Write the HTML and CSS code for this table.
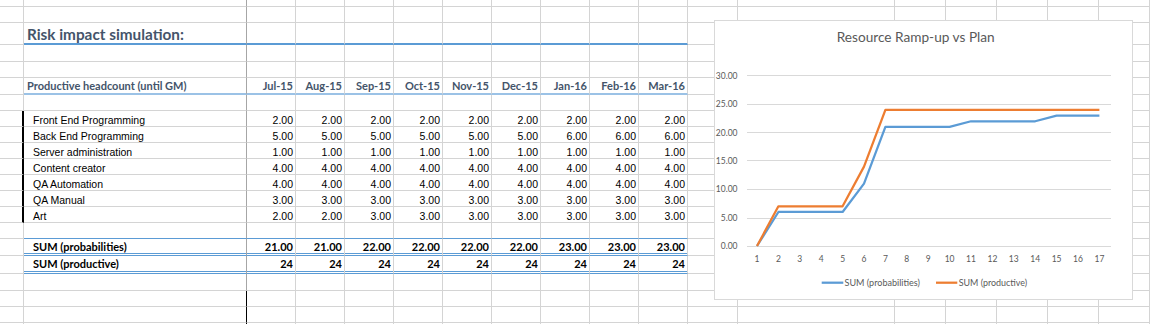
FILE: index.html
```html
<!DOCTYPE html>
<html lang="en">
<head>
<meta charset="utf-8">
<title>Risk impact simulation</title>
<link rel="stylesheet" href="styles.css">
</head>
<body>
<div class="sheet">
  <div class="row h7"><div></div><div></div><div></div><div></div><div></div><div></div><div></div><div></div><div></div><div></div><div></div><div></div><div></div><div></div><div></div><div></div><div></div><div></div></div>
  <div class="row h16"><div></div><div></div><div></div><div></div><div></div><div></div><div></div><div></div><div></div><div></div><div></div><div></div><div></div><div></div><div></div><div></div><div></div><div></div></div>
  <div class="row h22 title"><div></div><div class="t-title">Risk impact simulation:</div><div></div><div></div><div></div><div></div><div></div><div></div><div></div><div></div><div></div><div></div><div></div><div></div><div></div><div></div><div></div><div></div></div>
  <div class="row h17"><div></div><div></div><div></div><div></div><div></div><div></div><div></div><div></div><div></div><div></div><div></div><div></div><div></div><div></div><div></div><div></div><div></div><div></div></div>
  <div class="row h16"><div></div><div></div><div></div><div></div><div></div><div></div><div></div><div></div><div></div><div></div><div></div><div></div><div></div><div></div><div></div><div></div><div></div><div></div></div>
  <div class="row h17 head"><div></div><div>Productive headcount (until GM)</div><div>Jul-15</div><div>Aug-15</div><div>Sep-15</div><div>Oct-15</div><div>Nov-15</div><div>Dec-15</div><div>Jan-16</div><div>Feb-16</div><div>Mar-16</div><div></div><div></div><div></div><div></div><div></div><div></div><div></div></div>
  <div class="row h16"><div></div><div></div><div></div><div></div><div></div><div></div><div></div><div></div><div></div><div></div><div></div><div></div><div></div><div></div><div></div><div></div><div></div><div></div></div>
  <div class="row h16 data"><div></div><div>Front End Programming</div><div>2.00</div><div>2.00</div><div>2.00</div><div>2.00</div><div>2.00</div><div>2.00</div><div>2.00</div><div>2.00</div><div>2.00</div><div></div><div></div><div></div><div></div><div></div><div></div><div></div></div>
  <div class="row h16 data"><div></div><div>Back End Programming</div><div>5.00</div><div>5.00</div><div>5.00</div><div>5.00</div><div>5.00</div><div>5.00</div><div>6.00</div><div>6.00</div><div>6.00</div><div></div><div></div><div></div><div></div><div></div><div></div><div></div></div>
  <div class="row h16 data"><div></div><div>Server administration</div><div>1.00</div><div>1.00</div><div>1.00</div><div>1.00</div><div>1.00</div><div>1.00</div><div>1.00</div><div>1.00</div><div>1.00</div><div></div><div></div><div></div><div></div><div></div><div></div><div></div></div>
  <div class="row h16 data"><div></div><div>Content creator</div><div>4.00</div><div>4.00</div><div>4.00</div><div>4.00</div><div>4.00</div><div>4.00</div><div>4.00</div><div>4.00</div><div>4.00</div><div></div><div></div><div></div><div></div><div></div><div></div><div></div></div>
  <div class="row h16 data"><div></div><div>QA Automation</div><div>4.00</div><div>4.00</div><div>4.00</div><div>4.00</div><div>4.00</div><div>4.00</div><div>4.00</div><div>4.00</div><div>4.00</div><div></div><div></div><div></div><div></div><div></div><div></div><div></div></div>
  <div class="row h16 data"><div></div><div>QA Manual</div><div>3.00</div><div>3.00</div><div>3.00</div><div>3.00</div><div>3.00</div><div>3.00</div><div>3.00</div><div>3.00</div><div>3.00</div><div></div><div></div><div></div><div></div><div></div><div></div><div></div></div>
  <div class="row h16 data"><div></div><div>Art</div><div>2.00</div><div>2.00</div><div>3.00</div><div>3.00</div><div>3.00</div><div>3.00</div><div>3.00</div><div>3.00</div><div>3.00</div><div></div><div></div><div></div><div></div><div></div><div></div><div></div></div>
  <div class="row h16 pre-sum"><div></div><div></div><div></div><div></div><div></div><div></div><div></div><div></div><div></div><div></div><div></div><div></div><div></div><div></div><div></div><div></div><div></div><div></div></div>
  <div class="row h17 sum sum-a"><div></div><div>SUM (probabilities)</div><div>21.00</div><div>21.00</div><div>22.00</div><div>22.00</div><div>22.00</div><div>22.00</div><div>23.00</div><div>23.00</div><div>23.00</div><div></div><div></div><div></div><div></div><div></div><div></div><div></div></div>
  <div class="row h18 sum sum-b"><div></div><div>SUM (productive)</div><div>24</div><div>24</div><div>24</div><div>24</div><div>24</div><div>24</div><div>24</div><div>24</div><div>24</div><div></div><div></div><div></div><div></div><div></div><div></div><div></div></div>
  <div class="row h17"><div></div><div></div><div></div><div></div><div></div><div></div><div></div><div></div><div></div><div></div><div></div><div></div><div></div><div></div><div></div><div></div><div></div><div></div></div>
  <div class="row h16 tail"><div></div><div></div><div></div><div></div><div></div><div></div><div></div><div></div><div></div><div></div><div></div><div></div><div></div><div></div><div></div><div></div><div></div><div></div></div>
  <div class="row h16 tail"><div></div><div></div><div></div><div></div><div></div><div></div><div></div><div></div><div></div><div></div><div></div><div></div><div></div><div></div><div></div><div></div><div></div><div></div></div>
  <div class="row h2 tail"><div></div><div></div><div></div><div></div><div></div><div></div><div></div><div></div><div></div><div></div><div></div><div></div><div></div><div></div><div></div><div></div><div></div><div></div></div>
</div>

<div class="chart">
  <svg class="chart-svg" width="419" height="280" viewBox="714 20 419 280" xmlns="http://www.w3.org/2000/svg">
    <rect x="714.5" y="20.5" width="418" height="279" fill="#fff" stroke="#d9d9d9"/>
    <text class="c-title" x="836.7" y="42.3" textLength="158" lengthAdjust="spacingAndGlyphs">Resource Ramp-up vs Plan</text>
    <g class="grid" stroke="#d9d9d9" stroke-width="1" shape-rendering="crispEdges">
      <line x1="746.7" x2="1110.7" y1="75.5" y2="75.5"/>
      <line x1="746.7" x2="1110.7" y1="104.5" y2="104.5"/>
      <line x1="746.7" x2="1110.7" y1="132.5" y2="132.5"/>
      <line x1="746.7" x2="1110.7" y1="160.5" y2="160.5"/>
      <line x1="746.7" x2="1110.7" y1="189.5" y2="189.5"/>
      <line x1="746.7" x2="1110.7" y1="218.5" y2="218.5"/>
      <line x1="746.7" x2="1110.7" y1="246.5" y2="246.5"/>
    </g>
    <g class="ylab" text-anchor="end">
      <text x="737.5" y="78.5">30.00</text>
      <text x="737.5" y="107.3">25.00</text>
      <text x="737.5" y="135.5">20.00</text>
      <text x="737.5" y="163.8">15.00</text>
      <text x="737.5" y="192.3">10.00</text>
      <text x="737.5" y="221">5.00</text>
      <text x="737.5" y="249.3">0.00</text>
    </g>
    <g class="xlab" text-anchor="middle">
      <text x="757" y="262">1</text>
      <text x="778.4" y="262">2</text>
      <text x="799.8" y="262">3</text>
      <text x="821.2" y="262">4</text>
      <text x="842.6" y="262">5</text>
      <text x="864" y="262">6</text>
      <text x="885.4" y="262">7</text>
      <text x="906.8" y="262">8</text>
      <text x="928.2" y="262">9</text>
      <text x="949.6" y="262">10</text>
      <text x="971" y="262">11</text>
      <text x="992.4" y="262">12</text>
      <text x="1013.8" y="262">13</text>
      <text x="1035.2" y="262">14</text>
      <text x="1056.6" y="262">15</text>
      <text x="1078" y="262">16</text>
      <text x="1099.4" y="262">17</text>
    </g>
    <polyline fill="none" stroke="#5b9bd5" stroke-width="2.25" stroke-linejoin="round" points="757,246 778.4,211.98 799.8,211.98 821.2,211.98 842.6,211.98 864,183.63 885.4,126.93 906.8,126.93 928.2,126.93 949.6,126.93 971,121.26 992.4,121.26 1013.8,121.26 1035.2,121.26 1056.6,115.59 1078,115.59 1099.4,115.59"/>
    <polyline fill="none" stroke="#ed7d31" stroke-width="2.25" stroke-linejoin="round" points="757,246 778.4,206.31 799.8,206.31 821.2,206.31 842.6,206.31 864,166.62 885.4,109.92 906.8,109.92 928.2,109.92 949.6,109.92 971,109.92 992.4,109.92 1013.8,109.92 1035.2,109.92 1056.6,109.92 1078,109.92 1099.4,109.92"/>
    <line x1="821.7" x2="843.3" y1="282.7" y2="282.7" stroke="#5b9bd5" stroke-width="2.25"/>
    <text class="leg" x="844.5" y="286" textLength="75.5" lengthAdjust="spacingAndGlyphs">SUM (probabilities)</text>
    <line x1="936" x2="957.3" y1="282.7" y2="282.7" stroke="#ed7d31" stroke-width="2.25"/>
    <text class="leg" x="958.7" y="286" textLength="68.5" lengthAdjust="spacingAndGlyphs">SUM (productive)</text>
  </svg>
</div>
</body>
</html>
```

FILE: styles.css
```css
html, body {
  margin: 0;
  padding: 0;
  background: #ffffff;
  overflow: hidden;
}

.sheet {
  display: flex;
  flex-direction: column;
  width: 1150px;
}

.row {
  display: grid;
  grid-template-columns: 24px 223px repeat(9, 49px) 50px 157px repeat(5, 51px);
}

.row > div {
  box-sizing: border-box;
  border-right: 1px solid #d4d4d4;
  border-bottom: 1px solid #d4d4d4;
  display: flex;
  align-items: flex-end;
  justify-content: flex-end;
  padding: 0 2px 0 0;
  white-space: nowrap;
  font-family: "Liberation Sans", Arial, sans-serif;
  font-size: 10.5px;
  line-height: 12px;
  color: #000;
  min-width: 0;
}

.row > div:nth-child(2) {
  justify-content: flex-start;
  border-right-color: #a6a6a6;
  padding: 0 0 0 9px;
}

.h2 { height: 2px; }
.h7 { height: 7px; }
.h16 { height: 16px; }
.h17 { height: 17px; }
.h18 { height: 18px; }
.h22 { height: 22px; }

/* Title row */
.title > div:nth-child(n+2):nth-child(-n+11) {
  border-bottom: 2px solid #5b9bd5;
}
.row.title > div.t-title {
  font-family: Lato, "Liberation Sans", sans-serif;
  font-weight: 700;
  font-size: 15.3px;
  line-height: 16px;
  color: #44546a;
  padding: 0 0 1px 3px;
}

/* Header row */
.head > div:nth-child(n+2):nth-child(-n+11) {
  border-bottom: 2px solid #9bc2e6;
  font-family: Lato, "Liberation Sans", sans-serif;
  font-weight: 700;
  font-size: 11px;
  line-height: 12px;
  color: #44546a;
  padding-bottom: 1px;
}
.head > div:nth-child(2) {
  padding-left: 3px;
}

/* Data rows */
.data > div:first-child {
  border-right: 2px solid #000;
}

/* Sum rows: blue single line above, blue double lines below */
.pre-sum > div:nth-child(n+2):nth-child(-n+11) {
  border-bottom-color: #5b9bd5;
}
.sum > div:nth-child(n+2):nth-child(-n+11) {
  border-bottom: 1px solid #5b9bd5;
  box-shadow: inset 0 -1px 0 0 #ffffff, inset 0 -2px 0 0 #5b9bd5;
  font-family: Lato, "Liberation Sans", sans-serif;
  font-weight: 700;
  font-size: 11px;
  line-height: 12px;
  color: #000;
  padding-bottom: 2px;
}
.sum-b > div:nth-child(n+2):nth-child(-n+11) {
  padding-bottom: 3px;
}

/* Bottom rows: selection edge */
.tail > div:nth-child(2) {
  border-right-color: #000;
}

/* Chart */
.chart {
  position: absolute;
  left: 714px;
  top: 20px;
  width: 419px;
  height: 280px;
}
.chart-svg {
  display: block;
}
.c-title {
  font-family: Lato, "Liberation Sans", sans-serif;
  font-size: 14px;
  fill: #595959;
}
.ylab text, .xlab text {
  font-family: Lato, "Liberation Sans", sans-serif;
  font-size: 8.5px;
  fill: #595959;
}
.leg {
  font-family: Lato, "Liberation Sans", sans-serif;
  font-size: 9px;
  fill: #595959;
}
```
